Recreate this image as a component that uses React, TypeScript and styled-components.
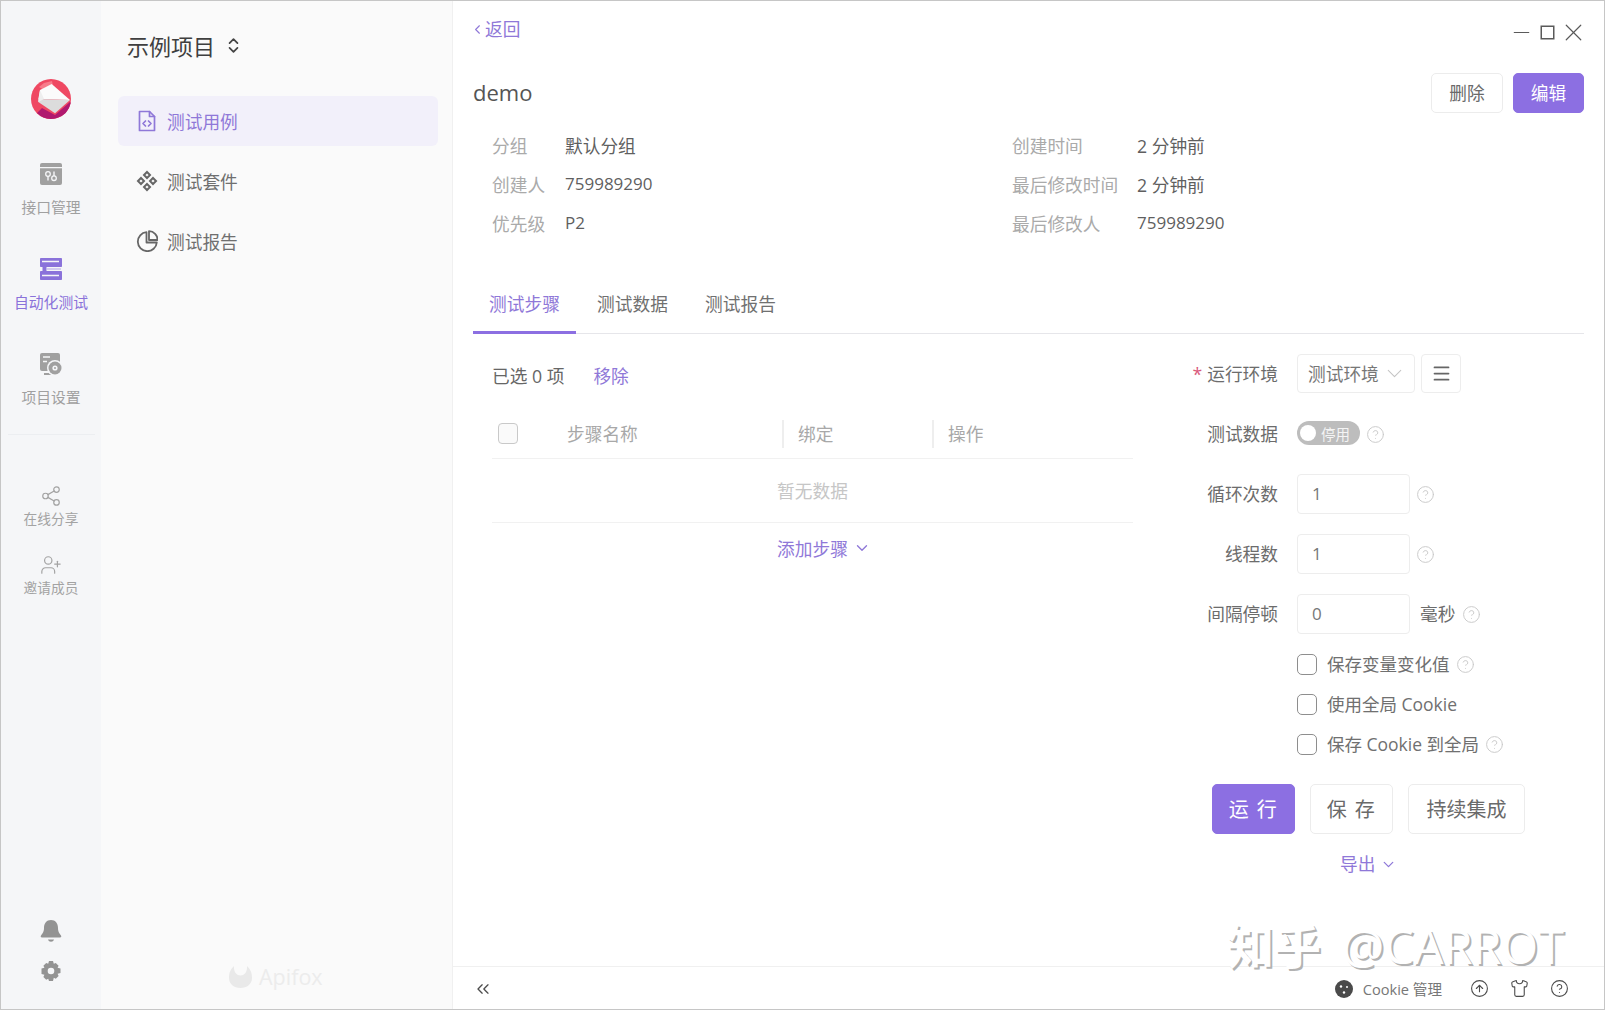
import React from "react";
import styled, { createGlobalStyle } from "styled-components";
import {
  ChevronDown,
  ChevronLeft,
  ChevronsLeft,
  ChevronsUpDown,
  CircleArrowUp,
  CircleHelp,
  Menu,
  Minus,
  Shirt,
  Share2,
  UserPlus,
  X,
} from "lucide-react";

const purple = "#8c6fe2";
const purpleText = "#8f78d8";

const Global = createGlobalStyle`
  html, body { margin: 0; padding: 0; background: #fff; }
  body {
    font-family: "Open Sans", "Noto Sans CJK SC", "Noto Sans", sans-serif;
    font-size: 17.7px;
    color: #666;
    overflow: hidden;
  }
  * { box-sizing: border-box; }
`;

const Windowed = styled.div`
  position: relative;
  width: 1605px;
  height: 1010px;
  display: grid;
  grid-template-columns: 100px 352px 1fr;
  border: 1px solid #c6c6c6;
  overflow: hidden;
  background: #fff;
`;

const CornerGap = styled.div`
  position: absolute;
  right: -1px;
  top: 0;
  width: 1px;
  height: 47px;
  background: #fff;
`;

/* ---------- left rail ---------- */
const Rail = styled.nav`
  background: #f5f6f8;
  display: flex;
  flex-direction: column;
  align-items: center;
  padding-top: 77px;
`;

const LogoWrap = styled.div`
  width: 42px;
  height: 42px;
  margin-bottom: 31px;
`;

const RailItem = styled.div<{ $active?: boolean }>`
  height: 95px;
  width: 100%;
  display: flex;
  flex-direction: column;
  align-items: center;
  padding-top: 11px;
  gap: 11px;
  color: ${(p) => (p.$active ? "#8a72da" : "#a0a0a0")};
  font-size: 14.8px;
  line-height: 20px;
  white-space: nowrap;
  svg { display: block; }
`;

const RailDivider = styled.div`
  width: 87px;
  height: 1px;
  background: #eceef1;
  margin: -2px 0 50px;
`;

const RailSmall = styled.div`
  height: 69px;
  display: flex;
  flex-direction: column;
  align-items: center;
  color: #a3a3a3;
  font-size: 13.7px;
  line-height: 18px;
  gap: 3px;
`;

const RailBottom = styled.div`
  margin-top: auto;
  padding-bottom: 27px;
  display: flex;
  flex-direction: column;
  align-items: center;
  gap: 17px;
  color: #939393;
`;

/* ---------- project sidebar ---------- */
const Sidebar = styled.aside`
  background: #fafafa;
  border-right: 1px solid #f0f0f0;
  display: flex;
  flex-direction: column;
  padding: 0 14px 0 17px;
`;

const ProjectTitle = styled.div`
  height: 95px;
  padding: 0 0 7px 9px;
  display: flex;
  align-items: center;
  gap: 9px;
  font-size: 22px;
  color: #3f3f3f;
  svg { color: #444; }
`;

const MenuItem = styled.div<{ $active?: boolean }>`
  height: 50px;
  margin-bottom: 10px;
  border-radius: 6px;
  display: flex;
  align-items: center;
  gap: 9px;
  padding: 0 0 1px 18px;
  color: ${(p) => (p.$active ? purpleText : "#6f6f6f")};
  background: ${(p) => (p.$active ? "#f2f0fa" : "transparent")};
`;

const Brand = styled.div`
  margin-top: auto;
  margin-bottom: 17px;
  padding-left: 110px;
  display: flex;
  align-items: center;
  gap: 6px;
  color: #ececec;
  font-size: 21.5px;
  line-height: 30px;
`;

/* ---------- main ---------- */
const Main = styled.main`
  display: flex;
  flex-direction: column;
  min-width: 0;
`;

const Content = styled.div`
  flex: 1;
  padding: 0 20px 0 20px;
  display: flex;
  flex-direction: column;
  min-height: 0;
`;

const TopBar = styled.div`
  height: 72px;
  display: flex;
  justify-content: space-between;
  align-items: flex-start;
  padding-top: 15px;
`;

const BackLink = styled.div`
  display: flex;
  align-items: center;
  gap: 0;
  line-height: 26px;
  margin-left: -3px;
  color: ${purpleText};
`;

const WindowControls = styled.div`
  display: flex;
  align-items: center;
  gap: 3px;
  height: 32px;
  color: #5a5a5a;
  margin-right: -4px;
  svg:first-child { margin-right: 2px; }
`;

const TitleRow = styled.div`
  height: 40px;
  display: flex;
  align-items: center;
  justify-content: space-between;
`;

const Title = styled.h1`
  margin: -3px 0 0;
  font-size: 22px;
  font-weight: 400;
  color: #555;
`;

const ActionGroup = styled.div`
  display: flex;
  gap: 10px;
`;

const Button = styled.button<{ $primary?: boolean; $w: number; $h: number; $fs?: number; $ls?: number }>`
  width: ${(p) => p.$w}px;
  height: ${(p) => p.$h}px;
  border-radius: 5px;
  font-family: inherit;
  font-size: ${(p) => p.$fs ?? 17.7}px;
  letter-spacing: ${(p) => p.$ls ?? 0}px;
  padding: 0 0 2px;
  border: 1px solid ${(p) => (p.$primary ? purple : "#ececec")};
  background: ${(p) => (p.$primary ? purple : "#fff")};
  color: ${(p) => (p.$primary ? "#fff" : "#6a6a6a")};
`;

const MetaGrid = styled.dl`
  margin: 12px 0 0;
  padding-left: 19px;
  display: grid;
  grid-template-columns: 73px 447px 125px 1fr;
  grid-auto-rows: 39px;
  align-items: center;
`;

const MetaLabel = styled.dt`
  color: #aaa;
  white-space: nowrap;
`;

const MetaValue = styled.dd<{ $latin?: boolean }>`
  margin: 0;
  color: #5f5f5f;
  font-size: ${(p) => (p.$latin ? 17 : 17.7)}px;
`;

const Tabs = styled.div`
  margin-top: 42px;
  height: 50px;
  display: flex;
  gap: 5px;
  border-bottom: 1px solid #e6e6ea;
`;

const Tab = styled.div<{ $active?: boolean }>`
  width: 103px;
  padding-top: 7px;
  text-align: center;
  height: 50px;
  line-height: 26px;
  color: ${(p) => (p.$active ? purpleText : "#707070")};
  border-bottom: ${(p) => (p.$active ? `3px solid ${purple}` : "none")};
`;

const Body = styled.div`
  display: grid;
  grid-template-columns: 672px 1fr;
`;

const StepsPane = styled.section`
  padding: 29px 0 0 19px;
`;

const SelectionBar = styled.div`
  display: flex;
  gap: 29px;
  line-height: 26px;
  color: #666;
`;

const LinkText = styled.span`
  color: ${purpleText};
`;

const TableHead = styled.div`
  margin-top: 26px;
  width: 641px;
  height: 44px;
  padding-bottom: 6px;
  display: grid;
  grid-template-columns: 75px 215px 150px 1fr;
  align-items: center;
  border-bottom: 1px solid #f1f1f1;
  color: #a8a8a8;
`;

const HeadCell = styled.div<{ $divider?: boolean }>`
  height: 28px;
  line-height: 28px;
  padding-left: ${(p) => (p.$divider ? 14 : 0)}px;
  border-left: ${(p) => (p.$divider ? "2px solid #eeeeee" : "none")};
`;

const HeadCheckCell = styled.div`
  padding-left: 6px;
`;

const HeadCheck = styled.div`
  width: 20px;
  height: 21px;
  background: #fafafa;
  border: 1px solid #c9c9c9;
  border-radius: 4px;
`;

const EmptyRow = styled.div`
  width: 641px;
  height: 64px;
  padding-bottom: 2px;
  display: flex;
  align-items: center;
  justify-content: center;
  border-bottom: 1px solid #f1f1f1;
  color: #c6c6c6;
`;

const AddRow = styled.div`
  width: 641px;
  height: 52px;
  padding: 0 0 3px 23px;
  display: flex;
  align-items: center;
  justify-content: center;
  gap: 5px;
  color: ${purpleText};
`;

const FormPane = styled.section`
  padding-top: 10px;
`;

const FormRow = styled.div`
  height: 60px;
  display: flex;
  align-items: center;
  color: #6c6c6c;
`;

const FormLabel = styled.div`
  width: 133px;
  margin-right: 19px;
  padding-bottom: 2px;
  text-align: right;
  white-space: nowrap;
`;

const Required = styled.span`
  color: #d9587c;
  margin-right: 5px;
`;

const SelectBox = styled.div`
  width: 118px;
  height: 39px;
  margin-top: -2px;
  border: 1px solid #ededed;
  border-radius: 4px;
  display: flex;
  align-items: center;
  justify-content: space-between;
  padding: 0 7px 0 10px;
  color: #777;
  white-space: nowrap;
  svg { color: #c4c4c4; flex: none; }
`;

const IconBox = styled.div`
  width: 40px;
  height: 39px;
  margin: -2px 0 0 6px;
  border: 1px solid #ededed;
  border-radius: 4px;
  display: flex;
  align-items: center;
  justify-content: center;
  color: #666;
`;

const Toggle = styled.div`
  width: 63px;
  height: 24px;
  margin-top: -2px;
  border-radius: 12px;
  background: #bdbdbd;
  color: #f4f4f4;
  font-size: 14.5px;
  display: flex;
  align-items: center;
  padding-left: 3px;
  gap: 5px;
`;

const Knob = styled.span`
  width: 16px;
  height: 16px;
  border-radius: 50%;
  background: #fff;
  flex: none;
`;

const NumberBox = styled.div`
  width: 113px;
  height: 40px;
  border: 1px solid #ededed;
  border-radius: 4px;
  padding-left: 14px;
  line-height: 38px;
  color: #777;
  font-size: 17px;
`;

const Unit = styled.span`
  margin-left: 10px;
  padding-bottom: 2px;
  color: #6c6c6c;
`;

const Help = styled(CircleHelp)<{ $gap: number }>`
  margin-left: ${(p) => p.$gap}px;
  color: #c9c9c9;
  flex: none;
`;

const CheckRow = styled.div`
  height: 40px;
  display: flex;
  align-items: center;
  padding-left: 152px;
  color: #707070;
  font-size: 17.5px;
  white-space: nowrap;
`;

const CheckBox = styled.span`
  width: 20px;
  height: 21px;
  border: 1px solid #8e8e8e;
  border-radius: 5px;
  margin-right: 10px;
  flex: none;
`;

const CheckText = styled.span`
  padding-bottom: 2px;
`;

const RunButtons = styled.div`
  margin: 20px 0 0 67px;
  display: flex;
  gap: 15px;
`;

const ExportRow = styled.div`
  margin: 17px 0 0 195px;
  display: flex;
  align-items: center;
  gap: 5px;
  line-height: 26px;
  color: ${purpleText};
`;

/* ---------- footer ---------- */
const Footer = styled.footer`
  height: 43px;
  flex: none;
  border-top: 1px solid #f0f0f0;
  display: flex;
  align-items: center;
  padding: 1px 35px 0 20px;
  color: #4d4d4d;
`;

const FooterRight = styled.div`
  margin-left: auto;
  display: flex;
  align-items: center;
  gap: 21px;
`;

const CookieLink = styled.div`
  display: flex;
  align-items: center;
  gap: 10px;
  font-size: 14.6px;
  color: #777;
  margin-right: 7px;
  svg { color: #4a4a4a; }
`;

const Watermark = styled.div`
  position: absolute;
  left: 1226px;
  top: 918px;
  font-family: "Noto Sans CJK SC", "Open Sans", sans-serif;
  font-size: 47px;
  font-weight: 700;
  line-height: 50px;
  color: #fff;
  white-space: nowrap;
  text-shadow: 2px 1.5px 0 #b2b2b2;
`;

const WatermarkLatin = styled.span`
  font-family: "Open Sans", sans-serif;
  font-size: 47px;
  font-weight: 400;
  margin-left: 21px;
`;

/* ---------- drawn icons ---------- */
const Logo = () => (
  <svg width="42" height="42" viewBox="0 0 42 42">
    <circle cx="21" cy="21" r="20" fill="#ef4862" />
    <path d="M40 24 L25 37 L12 30 L7 35 A20 20 0 0 0 40.700 25Z" fill="#b0196f" />
    <path d="M14 5 L22 3 L23 8 L14 12 L9 9Z" fill="#f77b8a" />
    <path d="M10 12 L21.700 6 L40 22 L8.300 21Z" fill="#fbfbfb" />
    <path d="M8.300 21 L40 22 L25 35.300 L8.300 24Z" fill="#dcdcdc" />
    <path d="M10 12 L14 21 L8.300 24Z" fill="#eeeeee" />
  </svg>
);

const ApiIcon = () => (
  <svg width="24" height="24" viewBox="0 0 24 24" fill="currentColor">
    <path d="M1 3a2 2 0 0 1 2-2h18a2 2 0 0 1 2 2v2H1z" />
    <path d="M1 6.300h22V21a2 2 0 0 1-2 2H3a2 2 0 0 1-2-2z" />
    <circle cx="9" cy="12" r="2.300" fill="none" stroke="#f5f6f8" strokeWidth="1.300" />
    <rect x="8.300" y="14" width="1.400" height="4.500" fill="#f5f6f8" />
    <circle cx="15" cy="16.200" r="2.300" fill="none" stroke="#f5f6f8" strokeWidth="1.300" />
    <rect x="14.300" y="9.500" width="1.400" height="4.500" fill="#f5f6f8" />
  </svg>
);

const AutoIcon = () => (
  <svg width="24" height="24" viewBox="0 0 24 24" fill="currentColor">
    <rect x="1" y="1" width="22" height="9" rx="0.800" />
    <rect x="1" y="14" width="22" height="9" rx="0.800" />
    <rect x="3.500" y="9" width="4" height="6" />
    <path d="M3 4.500h17M3 18.500h17" stroke="#f5f6f8" strokeWidth="1.300" />
    <path d="M8 12h14" stroke="#bdb1ec" strokeWidth="1.200" />
  </svg>
);

const SettingIcon = () => (
  <svg width="24" height="24" viewBox="0 0 24 24" fill="currentColor">
    <rect x="1" y="1" width="20" height="18" rx="2" />
    <path d="M5 22h8" stroke="currentColor" strokeWidth="2" />
    <path d="M4 5h7M4 9.500h4" stroke="#f5f6f8" strokeWidth="1.600" />
    <circle cx="16" cy="16" r="8" fill="#f5f6f8" />
    <circle cx="16" cy="16" r="6.500" />
    <circle cx="16" cy="16" r="2.600" fill="#f5f6f8" />
    <circle cx="16" cy="16" r="1" />
  </svg>
);

const FileIcon = () => (
  <svg width="22" height="22" viewBox="-1 0 22 22" fill="none" stroke="currentColor" strokeWidth="1.700" strokeLinejoin="round" strokeLinecap="round">
    <path d="M2.500 1.500h10l5 5v14h-15z" />
    <path d="M12.500 1.500v5h5" />
    <path d="M8.500 11l-2.500 2.500 2.500 2.500M11.500 11l2.500 2.500-2.500 2.500" />
  </svg>
);

const SuiteIcon = () => (
  <svg width="22" height="22" viewBox="0 0 22 22" fill="none" stroke="#666" strokeWidth="2">
    <path d="M11 2l3 3-3 3-3-3z" />
    <path d="M11 14l3 3-3 3-3-3z" />
    <path d="M5 8l3 3-3 3-3-3z" />
    <path d="M17 8l3 3-3 3-3-3z" />
  </svg>
);

const PieIcon = () => (
  <svg width="22" height="22" viewBox="0 0 22 22" fill="none" stroke="#666" strokeWidth="1.800" strokeLinejoin="round">
    <path d="M10.500 2.200A9.500 9.500 0 1 0 20.800 12.500H10.500z" />
    <path d="M12.500 1.200a8.500 8.500 0 0 1 8.500 8.800h-8.500z" transform="translate(0.500 0)" />
  </svg>
);

const BellIcon = () => (
  <svg width="22" height="24" viewBox="0 0 22 24" fill="currentColor">
    <path d="M11 1c4.500 0 7 3.500 7 8 0 4 1.500 5.500 3 7.500 .6 1 .2 2-1 2H2c-1.200 0-1.600-1-1-2C2.500 14.500 4 13 4 9c0-4.500 2.500-8 7-8z" />
    <path d="M8 20.500h6c-.5 1.500-1.600 2.200-3 2.200s-2.500-.7-3-2.200z" />
  </svg>
);

const GearIcon = () => (
  <svg width="22" height="22" viewBox="0 0 22 22">
    <path
      fill="currentColor"
      d="M9 1h4l.8 2.800 2-.9 2.800 2.800-1 2 2.900.9v4.400l-2.900.8 1 2.100-2.800 2.800-2-1L13 21H9l-.8-2.300-2 1-2.800-2.800 1-2.100-2.900-.8V8.600l2.900-.9-1-2 2.800-2.800 2 .9z"
    />
    <circle cx="11" cy="11" r="3.300" fill="#f5f6f8" />
  </svg>
);

const FoxIcon = () => (
  <svg width="25" height="24" viewBox="0 0 25 24" fill="#e9e9e9">
    <path d="M1 13C1 7 3 4 6 1c-.5 5 2 9.500 6.500 9.500S19.500 6 19 1c3 3 5 6 5 12 0 6-5 10-11.500 10S1 19 1 13z" />
  </svg>
);

const CookieIcon = () => (
  <svg width="18" height="18" viewBox="0 0 18 18">
    <circle cx="9" cy="9" r="9" fill="currentColor" />
    <circle cx="6" cy="6.500" r="1.200" fill="#fff" />
    <circle cx="12" cy="7" r="1" fill="#fff" />
    <circle cx="9" cy="12.500" r="1.200" fill="#fff" />
  </svg>
);

const SquareIcon = () => (
  <svg width="17" height="17" viewBox="0 0 17 17" fill="none" stroke="currentColor" strokeWidth="1.500">
    <rect x="2.250" y="2.250" width="12.500" height="12.500" />
  </svg>
);

const meta = [
  ["分组", "默认分组", "创建时间", "2 分钟前"],
  ["创建人", "759989290", "最后修改时间", "2 分钟前"],
  ["优先级", "P2", "最后修改人", "759989290"],
];

export default function App() {
  return (
    <>
      <Global />
      <Windowed>
        <Rail>
          <LogoWrap>
            <Logo />
          </LogoWrap>
          <RailItem>
            <ApiIcon />
            接口管理
          </RailItem>
          <RailItem $active>
            <AutoIcon />
            自动化测试
          </RailItem>
          <RailItem>
            <SettingIcon />
            项目设置
          </RailItem>
          <RailDivider />
          <RailSmall>
            <Share2 size={22} strokeWidth={1.3} />
            在线分享
          </RailSmall>
          <RailSmall>
            <UserPlus size={22} strokeWidth={1.3} />
            邀请成员
          </RailSmall>
          <RailBottom>
            <BellIcon />
            <GearIcon />
          </RailBottom>
        </Rail>

        <Sidebar>
          <ProjectTitle>
            示例项目
            <ChevronsUpDown size={19} strokeWidth={2.2} />
          </ProjectTitle>
          <MenuItem $active>
            <FileIcon />
            测试用例
          </MenuItem>
          <MenuItem>
            <SuiteIcon />
            测试套件
          </MenuItem>
          <MenuItem>
            <PieIcon />
            测试报告
          </MenuItem>
          <Brand>
            <FoxIcon />
            Apifox
          </Brand>
        </Sidebar>

        <Main>
          <Content>
            <TopBar>
              <BackLink>
                <ChevronLeft size={15} strokeWidth={1.8} />
                返回
              </BackLink>
              <WindowControls>
                <Minus size={25} strokeWidth={1} />
                <SquareIcon />
                <X size={29} strokeWidth={1} />
              </WindowControls>
            </TopBar>

            <TitleRow>
              <Title>demo</Title>
              <ActionGroup>
                <Button $w={72} $h={40}>删除</Button>
                <Button $primary $w={71} $h={40}>编辑</Button>
              </ActionGroup>
            </TitleRow>

            <MetaGrid>
              {meta.map((row) => (
                <React.Fragment key={row[0]}>
                  <MetaLabel>{row[0]}</MetaLabel>
                  <MetaValue $latin={/^[\dA-Z]+$/.test(row[1])}>{row[1]}</MetaValue>
                  <MetaLabel>{row[2]}</MetaLabel>
                  <MetaValue $latin={/^[\dA-Z]+$/.test(row[3])}>{row[3]}</MetaValue>
                </React.Fragment>
              ))}
            </MetaGrid>

            <Tabs>
              <Tab $active>测试步骤</Tab>
              <Tab>测试数据</Tab>
              <Tab>测试报告</Tab>
            </Tabs>

            <Body>
              <StepsPane>
                <SelectionBar>
                  <span>已选 0 项</span>
                  <LinkText>移除</LinkText>
                </SelectionBar>
                <TableHead>
                  <HeadCheckCell>
                    <HeadCheck />
                  </HeadCheckCell>
                  <HeadCell>步骤名称</HeadCell>
                  <HeadCell $divider>绑定</HeadCell>
                  <HeadCell $divider>操作</HeadCell>
                </TableHead>
                <EmptyRow>暂无数据</EmptyRow>
                <AddRow>
                  添加步骤
                  <ChevronDown size={18} strokeWidth={1.8} />
                </AddRow>
              </StepsPane>

              <FormPane>
                <FormRow>
                  <FormLabel>
                    <Required>*</Required>运行环境
                  </FormLabel>
                  <SelectBox>
                    测试环境
                    <ChevronDown size={25} strokeWidth={1} />
                  </SelectBox>
                  <IconBox>
                    <Menu size={21} strokeWidth={2} />
                  </IconBox>
                </FormRow>
                <FormRow>
                  <FormLabel>测试数据</FormLabel>
                  <Toggle>
                    <Knob />
                    停用
                  </Toggle>
                  <Help size={19} strokeWidth={1.2} $gap={6} />
                </FormRow>
                <FormRow>
                  <FormLabel>循环次数</FormLabel>
                  <NumberBox>1</NumberBox>
                  <Help size={19} strokeWidth={1.2} $gap={6} />
                </FormRow>
                <FormRow>
                  <FormLabel>线程数</FormLabel>
                  <NumberBox>1</NumberBox>
                  <Help size={19} strokeWidth={1.2} $gap={6} />
                </FormRow>
                <FormRow>
                  <FormLabel>间隔停顿</FormLabel>
                  <NumberBox>0</NumberBox>
                  <Unit>毫秒</Unit>
                  <Help size={19} strokeWidth={1.2} $gap={7} />
                </FormRow>
                <CheckRow>
                  <CheckBox />
                  <CheckText>保存变量变化值</CheckText>
                  <Help size={19} strokeWidth={1.2} $gap={6} />
                </CheckRow>
                <CheckRow>
                  <CheckBox />
                  <CheckText>使用全局 Cookie</CheckText>
                </CheckRow>
                <CheckRow>
                  <CheckBox />
                  <CheckText>保存 Cookie 到全局</CheckText>
                  <Help size={19} strokeWidth={1.2} $gap={6} />
                </CheckRow>
                <RunButtons>
                  <Button $primary $w={83} $h={50} $fs={20} $ls={1.5}>运 行</Button>
                  <Button $w={83} $h={50} $fs={20} $ls={1.5}>保 存</Button>
                  <Button $w={117} $h={50} $fs={20}>持续集成</Button>
                </RunButtons>
                <ExportRow>
                  导出
                  <ChevronDown size={17} strokeWidth={1.8} />
                </ExportRow>
              </FormPane>
            </Body>
          </Content>

          <Footer>
            <ChevronsLeft size={20} strokeWidth={1.6} />
            <FooterRight>
              <CookieLink>
                <CookieIcon />
                Cookie 管理
              </CookieLink>
              <CircleArrowUp size={19} strokeWidth={1.4} />
              <Shirt size={19} strokeWidth={1.4} />
              <CircleHelp size={19} strokeWidth={1.4} />
            </FooterRight>
          </Footer>
        </Main>
        <CornerGap />
        <Watermark>
          知乎<WatermarkLatin>@CARROT</WatermarkLatin>
        </Watermark>
      </Windowed>
    </>
  );
}
